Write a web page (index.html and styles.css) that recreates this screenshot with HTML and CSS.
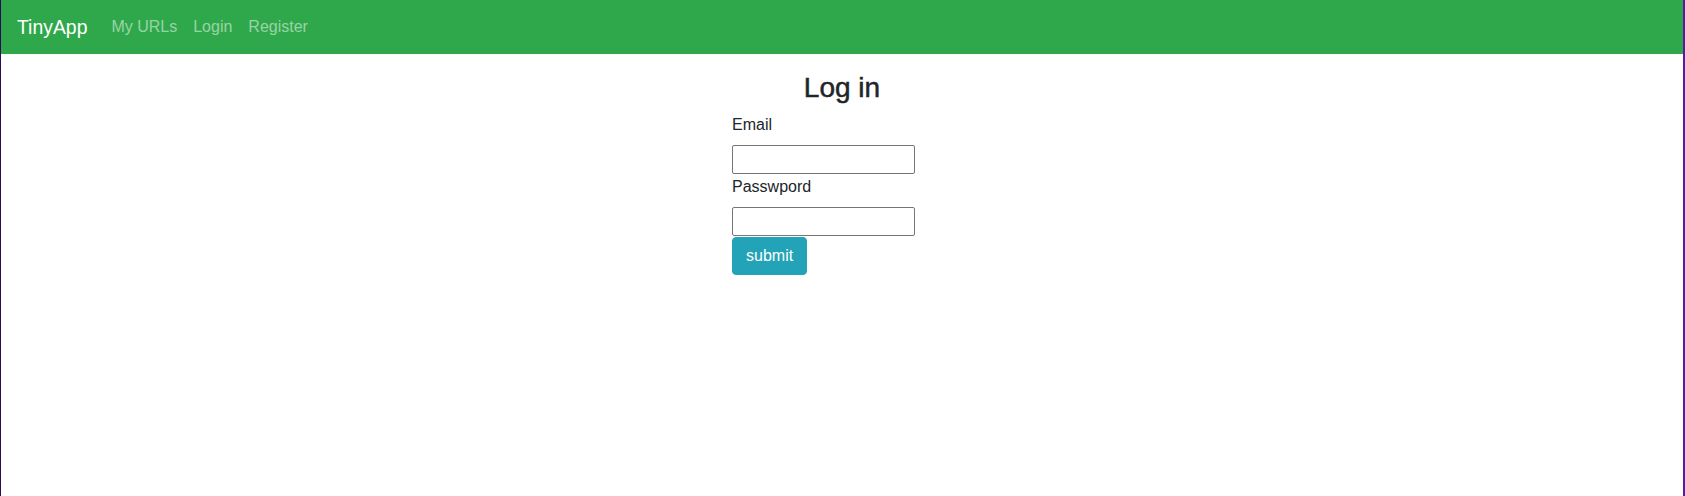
FILE: index.html
```html
<!DOCTYPE html>
<html lang="en">
<head>
<meta charset="utf-8">
<title>TinyApp - Log in</title>
<link rel="stylesheet" href="styles.css">
</head>
<body>
  <nav class="navbar">
    <a class="brand" href="#">TinyApp</a>
    <ul class="nav">
      <li><a class="nav-link" href="#">My URLs</a></li>
      <li><a class="nav-link" href="#">Login</a></li>
      <li><a class="nav-link" href="#">Register</a></li>
    </ul>
  </nav>
  <main class="page">
    <h3 class="title">Log in</h3>
    <form class="login-form">
      <label class="field-label" for="email">Email</label>
      <input class="field-input" id="email" type="text">
      <label class="field-label" for="password">Passwpord</label>
      <input class="field-input" id="password" type="password">
      <button class="btn-submit" type="submit">submit</button>
    </form>
  </main>
</body>
</html>
```

FILE: styles.css
```css
* { box-sizing: border-box; }

html, body { height: 100%; }

body {
  margin: 0;
  min-height: 496px;
  font-family: "Liberation Sans", Arial, sans-serif;
  font-size: 16px;
  line-height: 1.5;
  color: #212529;
  background: #fff;
  border-left: 1px solid #2a0b5a;
  border-right: 2px solid #5b18a6;
}

.navbar {
  display: flex;
  align-items: center;
  height: 54px;
  padding: 0 16px;
  background: #2ea84a;
}

.brand {
  font-size: 19.4px;
  line-height: 30px;
  color: #fff;
  text-decoration: none;
  margin-right: 16px;
}

.nav {
  display: flex;
  list-style: none;
  margin: 0;
  padding: 0;
}

.nav-link {
  display: block;
  padding: 0 8px;
  line-height: 24px;
  color: rgba(255, 255, 255, 0.52);
  text-decoration: none;
}

.page {
  display: flex;
  flex-direction: column;
  align-items: center;
  padding-top: 17px;
}

.title {
  margin: 0 0 8px;
  font-size: 28px;
  font-weight: 400;
  line-height: 1.2;
  color: #212529;
  -webkit-text-stroke: 0.5px #212529;
}

.login-form {
  width: 220px;
  display: flex;
  flex-direction: column;
  align-items: flex-start;
}

.field-label {
  line-height: 24px;
  margin-bottom: 8px;
}

.field-input {
  width: 183px;
  height: 29px;
  margin: 0 0 1px;
  padding: 1px 2px;
  border: 1px solid #767676;
  border-radius: 2px;
  font: inherit;
  background: #fff;
}

.btn-submit {
  height: 38px;
  padding: 6px 13px;
  border: 1px solid #22a3b8;
  border-radius: 4px;
  background: #22a3b8;
  color: #fff;
  font: inherit;
  line-height: 24px;
  cursor: pointer;
}
```
